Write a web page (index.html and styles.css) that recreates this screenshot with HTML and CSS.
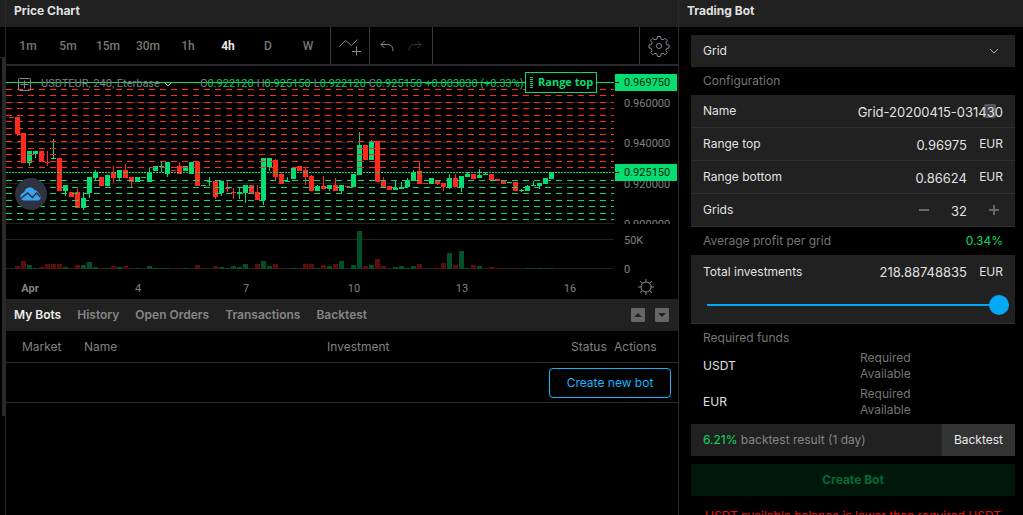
FILE: index.html
```html
<!DOCTYPE html>
<html lang="en">
<head>
    <meta charset="UTF-8">
    <meta name="viewport" content="width=device-width, initial-scale=1.0">
    <title>Trading Bot</title>
    <link rel="stylesheet" href="styles.css">
</head>
<body>
    <div class="gutter"><div class="gutter-top"></div><div class="gutter-bar"></div></div>

    <main class="main">
        <h2 class="panel-title">Price Chart</h2>

        <div class="toolbar">
            <div class="intervals">
                <button>1m</button>
                <button>5m</button>
                <button>15m</button>
                <button>30m</button>
                <button>1h</button>
                <button class="active">4h</button>
                <button>D</button>
                <button>W</button>
            </div>
            <button class="tool" aria-label="Indicators">
                <svg width="24" height="20" viewBox="0 0 24 20"><path d="M1.500 10.500 7.500 4.500 13.500 9.500 19.500 3.500M18.500 10.500v9M14 15.500h9"/></svg>
            </button>
            <div class="tool history">
                <button aria-label="Undo"><svg width="14" height="12" viewBox="0 0 14 12"><path d="M4.500 1 1 4.500 4.500 8M1 4.500h6.500q5.500 0 5.500 6.500"/></svg></button>
                <button aria-label="Redo" disabled><svg width="14" height="12" viewBox="0 0 14 12"><path d="M9.500 1 13 4.500 9.500 8M13 4.500H6.500Q1 4.500 1 11"/></svg></button>
            </div>
            <button class="tool settings" aria-label="Settings">
                <svg width="22" height="22" viewBox="0 0 22 22"><circle cx="11" cy="11" r="2.500"/><path d="M9.500 1.500h3l.5 2.500 2 .8 2.200-1.400 2.100 2.100-1.400 2.200.8 1.800 2.300.5v3l-2.300.5-.8 2 1.400 2.100-2.100 2.100-2.200-1.400-2 .8-.5 2.400h-3L9 19.100l-2-.8-2.200 1.400-2.100-2.100 1.400-2.100-.8-2L1 13v-3l2.300-.5.8-1.800-1.400-2.200 2.100-2.100L7 4.800 9 4z"/></svg>
            </button>
        </div>

        <div class="chart">
            <svg class="plot" id="plot"></svg>
            <svg class="axis" id="axis"></svg>
            <div class="legend">
                <svg width="13" height="13" viewBox="0 0 13 13"><rect x=".5" y=".5" width="12" height="12" rx="1"/><path d="M6.500 2.500v8M2.500 6.500h8"/></svg>
                <span class="symbol">USDTEUR, 240, Eterbase</span>
                <svg class="caret" width="8" height="5" viewBox="0 0 8 5"><path d="M1 1l3 3 3-3"/></svg>
                <span class="ohlc">O<b>0.922120</b></span>
                <span class="ohlc">H<b>0.925150</b></span>
                <span class="ohlc">L<b>0.922120</b></span>
                <span class="ohlc">C<b>0.925150</b></span>
                <span class="ohlc"><b>+0.003030 (+0.33%)</b></span>
            </div>
            <div class="range-tag">Range top</div>
            <div class="badge">
                <svg width="22" height="14" viewBox="0 0 22 14"><path d="M4 13.500a4 4 0 0 1-1.500-7.500Q4 5 4.500 4.500A5.500 5.500 0 0 1 14.500 3Q18 3.500 18.500 6.500A3.800 3.800 0 0 1 18.500 13.500z" fill="#3aa2ee"/><path d="M1 11.500 7.500 6l5 4.500 4-4.500 4 4" fill="none" stroke="#2a2e39" stroke-width="1.500"/></svg>
            </div>
        </div>

        <nav class="tabs">
            <button class="active">My Bots</button>
            <button>History</button>
            <button>Open Orders</button>
            <button>Transactions</button>
            <button>Backtest</button>
            <button class="square first" aria-label="Expand"><svg width="8" height="4" viewBox="0 0 8 4"><path d="M0 4 4 0l4 4z"/></svg></button>
            <button class="square" aria-label="Collapse"><svg width="8" height="4" viewBox="0 0 8 4"><path d="M0 0l4 4 4-4z"/></svg></button>
        </nav>

        <table class="bots">
            <thead>
                <tr>
                    <th class="col-market">Market</th>
                    <th class="col-name">Name</th>
                    <th>Investment</th>
                    <th class="col-status">Status</th>
                    <th class="col-actions">Actions</th>
                </tr>
            </thead>
            <tbody>
                <tr>
                    <td colspan="5"><button class="new-bot">Create new bot</button></td>
                </tr>
            </tbody>
        </table>
    </main>

    <aside class="side">
        <h2 class="panel-title">Trading Bot</h2>
        <form class="form">
            <div class="select">
                <select aria-label="Bot type"><option>Grid</option></select>
                <svg width="10" height="6" viewBox="0 0 10 6"><path d="M1 1l4 4 4-4"/></svg>
            </div>

            <div class="caption">Configuration</div>
            <div class="row">
                <label for="name">Name</label>
                <span class="autofill"></span>
                <input id="name" class="wide" type="text" value="Grid-20200415-031430">
            </div>
            <div class="row">
                <label for="top">Range top</label>
                <input id="top" type="text" value="0.96975">
                <span class="unit">EUR</span>
            </div>
            <div class="row">
                <label for="bottom">Range bottom</label>
                <input id="bottom" type="text" value="0.86624">
                <span class="unit">EUR</span>
            </div>
            <div class="row">
                <label for="grids">Grids</label>
                <button type="button" class="step" aria-label="Fewer grids"><svg width="10" height="10" viewBox="0 0 10 10"><path d="M0 5h10"/></svg></button>
                <input id="grids" class="count" type="text" value="32">
                <span class="unit"><button type="button" class="step" aria-label="More grids"><svg width="10" height="10" viewBox="0 0 10 10"><path d="M0 5h10M5 0v10"/></svg></button></span>
            </div>

            <div class="caption">Average profit per grid <span class="profit">0.34%</span></div>
            <div class="invest">
                <div class="row">
                    <label for="total">Total investments</label>
                    <input id="total" type="text" value="218.88748835">
                    <span class="unit">EUR</span>
                </div>
                <input class="slider" type="range" min="0" max="100" value="100" aria-label="Total investments">
            </div>

            <div class="caption funds-caption">Required funds</div>
            <div class="fund">
                <span>USDT</span>
                <div class="amounts">Required<br>Available</div>
            </div>
            <div class="fund">
                <span>EUR</span>
                <div class="amounts">Required<br>Available</div>
            </div>

            <div class="backtest">
                <span><b>6.21%</b> backtest result (1 day)</span>
                <button type="button">Backtest</button>
            </div>
            <button type="button" class="create" disabled>Create Bot</button>
            <p class="error">USDT available balance is lower than required USDT</p>
        </form>
    </aside>

    <script src="chart.js"></script>
</body>
</html>
```

FILE: styles.css
```css
* {
    box-sizing: border-box;
}

body {
    margin: 0;
    height: 100vh;
    display: flex;
    overflow: hidden;
    background-color: #000;
    color: #e0e0e0;
    font-family: Inter, sans-serif;
    font-size: 12px;
    line-height: 16px;
}

button,
input,
select {
    margin: 0;
    padding: 0;
    border: none;
    background: none;
    color: inherit;
    font: inherit;
}

svg {
    fill: none;
    stroke: #868993;
}

.gutter {
    width: 6px;
    border-right: 1px solid #2a2a2a;
    flex: none;
}

.gutter-top {
    height: 58px;
    border-top: 27px solid #212121;
    border-bottom: 1px solid #2a2a2a;
}

.gutter-bar {
    height: 358px;
    margin-left: 2px;
    background-color: #2a2a2a;
}

.main {
    flex: 1;
    min-width: 0;
}

.panel-title {
    height: 27px;
    margin: 0;
    padding: 3px 8px;
    background-color: #212121;
    font-size: 12px;
    font-weight: 700;
}

.toolbar {
    display: flex;
    height: 39px;
    border-bottom: 2px solid #2a2a2e;
}

.intervals {
    display: flex;
    padding: 0 2px;
}

.intervals button {
    width: 40px;
    color: #777;
    font-family: Roboto, sans-serif;
    font-weight: 500;
    font-size: 12px;
}

.intervals .active {
    color: #e8e8e8;
    font-weight: 700;
}

.tool {
    display: flex;
    align-items: center;
    justify-content: center;
    width: 39px;
    border-left: 1px solid #363a45;
}

.history {
    width: 64px;
    gap: 14px;
    border-right: 1px solid #363a45;
}

.history button {
    display: flex;
}

.history button:disabled {
    opacity: 0.4;
}

.settings {
    margin-left: auto;
}

.chart {
    position: relative;
    display: flex;
    height: 233px;
}

.plot {
    flex: 1;
    min-width: 0;
    height: 233px;
}

.axis {
    width: 64px;
    height: 233px;
}

.plot text,
.axis text {
    fill: #808080;
    stroke: none;
    font-family: Roboto, sans-serif;
    font-size: 11px;
}

.axis .on-tag {
    fill: #00240f;
}

.plot .month {
    font-weight: 700;
}

.legend {
    position: absolute;
    top: 10px;
    left: 12px;
    display: flex;
    align-items: center;
    color: #808080;
    font-family: Roboto, sans-serif;
    font-size: 11px;
    white-space: nowrap;
}

.legend b {
    color: #05c665;
    font-weight: 400;
}

.symbol {
    margin: 0 4px 0 10px;
}

.caret {
    margin-right: 28px;
    stroke: #ccc;
}

.ohlc {
    margin-right: 3px;
}

.range-tag {
    position: absolute;
    top: 6px;
    right: 81px;
    width: 72px;
    height: 21px;
    padding-left: 12px;
    border: 1px solid #05dd71;
    background-color: #000;
    color: #05dd71;
    font: 700 11px/18px "Open Sans", sans-serif;
}

.range-tag::before {
    content: "";
    position: absolute;
    top: 4px;
    left: 4px;
    width: 3px;
    height: 11px;
    background: repeating-linear-gradient(#05dd71 0 1px, #000 1px 2px);
}

.badge {
    position: absolute;
    top: 112px;
    left: 9px;
    display: flex;
    align-items: center;
    justify-content: center;
    width: 32px;
    height: 32px;
    border-radius: 50%;
    background-color: #2f3241;
}

.badge svg {
    stroke: none;
}

.tabs {
    display: flex;
    align-items: center;
    gap: 16px;
    height: 32px;
    padding: 0 9px 0 8px;
    background-color: #212121;
    color: #858585;
    font-weight: 600;
}

.tabs button {
    font-weight: 600;
}

.tabs .active {
    color: #eee;
}

.tabs .square {
    display: flex;
    align-items: center;
    justify-content: center;
    width: 14px;
    height: 14px;
    margin-left: -6px;
    border-radius: 1px;
    background-color: #666;
}

.tabs .first {
    margin-left: auto;
}

.square svg {
    fill: #212121;
    stroke: none;
}

.bots {
    width: 100%;
    table-layout: fixed;
    border-collapse: separate;
    border-spacing: 0;
}

.bots th {
    height: 32px;
    padding: 0;
    border-bottom: 1px solid #2a2a2a;
    color: #808080;
    font-weight: 400;
    text-align: left;
}

.bots td {
    height: 40px;
    padding: 0 7px 0 0;
    border-bottom: 1px solid #2a2a2a;
    text-align: right;
}

.bots .col-market {
    width: 78px;
    padding-left: 16px;
}

.col-name {
    width: 243px;
}

.col-status {
    width: 43px;
}

.col-actions {
    width: 64px;
}

.new-bot {
    width: 122px;
    height: 30px;
    border: 1px solid #14b4ff;
    border-radius: 4px;
    color: #14b4ff;
}

.side {
    width: 345px;
    flex: none;
    border-left: 1px solid #2a2a2a;
}

.form {
    padding: 8px 8px 0 12px;
}

.select {
    display: flex;
    align-items: center;
    height: 32px;
    padding-right: 16px;
    background-color: #212121;
}

.select select {
    flex: 1;
    height: 32px;
    padding: 0 12px;
    appearance: none;
}

.select svg {
    stroke: #aaa;
}

.caption {
    display: flex;
    justify-content: space-between;
    padding: 6px 12px;
    color: #757575;
}

.profit {
    color: #05dd60;
}

.row {
    position: relative;
    display: flex;
    align-items: center;
    height: 33px;
    padding: 0 12px;
    border-bottom: 1px solid #303030;
    background-color: #212121;
}

.row label {
    flex: 1;
}

.row input {
    width: 120px;
    height: 32px;
    padding-top: 1px;
    font-size: 13px;
    text-align: right;
}

.row .wide {
    position: relative;
    width: 200px;
}

.row .count {
    width: 34px;
}

.autofill {
    position: absolute;
    right: 19px;
    top: 9px;
    width: 12px;
    height: 14px;
    border: 2px solid #5a5a5a;
    border-radius: 2px;
    background-color: #45454d;
}

.unit {
    width: 36px;
    text-align: right;
}

.step {
    padding: 4px;
}

.step svg {
    display: block;
    stroke: #686868;
    stroke-width: 2;
}

.invest {
    height: 69px;
    border-bottom: 1px solid #303030;
    background-color: #212121;
}

.invest .row {
    border: none;
}

.slider {
    display: block;
    width: calc(100% - 22px);
    height: 20px;
    margin: 7px 6px 0 16px;
    appearance: none;
    background: linear-gradient(#03a9f4, #03a9f4) center / 100% 2px no-repeat;
}

.slider::-webkit-slider-thumb {
    appearance: none;
    width: 20px;
    height: 20px;
    border-radius: 50%;
    background-color: #03a9f4;
}

.funds-caption {
    padding-bottom: 4px;
}

.fund {
    display: flex;
    align-items: center;
    justify-content: space-between;
    margin-bottom: 4px;
    padding: 0 12px;
}

.amounts {
    width: 143px;
    color: #757575;
}

.backtest {
    display: flex;
    align-items: center;
    justify-content: space-between;
    height: 32px;
    margin: 6px 0 8px;
    padding-left: 12px;
    background-color: #212121;
    color: #858585;
}

.backtest b {
    color: #05dd60;
    font-weight: 400;
}

.backtest button {
    height: 32px;
    padding: 0 12px;
    background-color: #333;
    color: #e8e8e8;
}

.create {
    width: 100%;
    height: 32px;
    background-color: #00170b;
    color: #026b37;
    font-weight: 700;
}

.error {
    margin: 12px 0 0;
    color: #e51414;
    text-align: center;
    white-space: nowrap;
}
```

FILE: chart.js
```js
const GREEN = '#05dd71';
const RED = '#ff2a1c';
const plot = document.getElementById('plot');
const axis = document.getElementById('axis');

function add(parent, tag, attrs, text) {
    const el = document.createElementNS('http://www.w3.org/2000/svg', tag);
    for (const key in attrs) el.setAttribute(key, attrs[key]);
    if (text) el.textContent = text;
    parent.appendChild(el);
}

function hline(y, stroke, dash) {
    add(plot, 'line', { x1: 0, x2: '100%', y1: y + 0.5, y2: y + 0.5, stroke: stroke, 'stroke-dasharray': dash || 'none' });
}

// body top, body bottom, wick top, wick bottom, up (1) or down (0), volume (negative = red)
const candles = [
    [17,18,17,18,0,0],[17,34,17,36,0,-3],[33,63,33,63,0,-8],[51,63,51,66,1,4],[51,54,51,58,1,1],
    [51,62,51,62,0,-2],[62,63,51,66,0,-5],[58,59,39,59,1,-5],[58,91,58,91,0,-5],[85,91,85,96,1,2],
    [92,97,92,97,0,-1],[92,108,87,108,0,-4],[98,108,92,110,1,4],[77,93,77,98,1,7],[72,78,70,80,1,2],
    [77,86,77,86,0,-1],[75,86,75,86,1,1],[73,78,66,83,0,-3],[70,78,70,80,1,2],[70,78,64,78,0,-3],
    [77,82,77,87,0,-1],[77,82,77,82,1,1],[77,78,77,78,1,0],[72,82,68,82,1,3],[66,71,66,71,1,1],
    [66,67,62,72,1,1],[62,74,62,77,1,1],[70,71,70,71,0,0],[66,74,62,74,0,-1],[66,71,66,71,1,1],
    [62,74,62,74,1,0],[62,86,62,86,0,-4],[85,86,85,86,1,0],[81,82,77,86,1,0],[81,97,81,99,0,-3],
    [81,93,81,96,1,2],[88,89,81,92,0,1],[92,93,88,99,0,3],[92,94,88,99,1,2],[85,93,85,103,1,5],
    [85,93,85,93,0,0],[92,100,85,100,0,-5],[58,100,58,105,1,8],[58,67,58,71,1,3],[60,77,59,80,0,-5],
    [74,84,72,84,0,-1],[81,82,77,82,1,0],[68,79,68,79,1,1],[66,71,66,71,0,0],[70,77,67,85,0,-5],
    [76,91,75,91,0,-5],[86,91,85,91,1,1],[86,89,76,89,0,-4],[85,89,85,91,1,3],[85,91,78,91,0,-5],
    [85,91,85,93,1,8],[86,87,86,87,0,0],[74,87,74,87,1,4],[45,75,32,75,1,38],[45,60,45,60,0,-3],
    [41,60,40,60,1,4],[41,82,41,82,0,-10],[80,87,77,87,0,-3],[86,90,86,90,0,0],[88,90,80,90,1,2],
    [87,89,82,89,1,3],[80,87,78,87,1,1],[72,81,70,81,1,3],[71,84,61,84,0,-5],[83,84,83,84,0,0],
    [78,84,78,84,1,0],[81,84,81,85,0,-1],[83,87,83,91,0,-6],[78,88,74,89,1,16],[78,87,74,87,0,-4],
    [76,88,76,92,1,18],[74,77,72,77,1,1],[74,79,74,79,0,-4],[75,78,69,78,1,3],[74,75,72,75,1,0],
    [74,80,74,80,0,-2],[79,81,79,81,0,-1],[81,84,81,84,0,-1],[82,83,82,83,1,0],[82,91,82,91,0,-1],
    [90,91,89,92,1,0],[86,91,85,91,1,1],[85,86,81,86,1,1],[83,86,83,89,1,1],[78,84,78,84,1,1],
    [72,79,72,79,1,1]
];

[36, 76, 117, 157, 173, 202].forEach(y => hline(y, '#212121'));

candles.forEach(([top, bottom, high, low, up, volume], i) => {
    const x = 3 + i * 6;
    const fill = up ? GREEN : RED;
    add(plot, 'rect', { x: x, y: 34 + top, width: 5, height: bottom - top, fill: fill, stroke: 'none' });
    add(plot, 'rect', { x: x + 2, y: 34 + high, width: 1, height: low - high, fill: fill, stroke: 'none' });
    const size = Math.abs(volume);
    add(plot, 'rect', { x: x, y: 203 - size, width: 5, height: size, fill: volume < 0 ? '#5c0f0a' : '#025029', stroke: 'none' });
});

// sell grids above the price, buy grids below
[23, 29, 36, 42, 49, 55, 62, 68, 75, 82, 88, 95, 101].forEach(y => hline(y, RED, '6 5'));
[114, 121, 127, 134, 140, 147, 153].forEach(y => hline(y, GREEN, '6 5'));
hline(106, GREEN, '2 1');
hline(16, GREEN);

[['Apr', 24], ['4', 132], ['7', 240], ['10', 348], ['13', 456], ['16', 564]].forEach(([label, x]) => {
    add(plot, 'text', { x: x, y: 226, 'text-anchor': 'middle', class: label === 'Apr' ? 'month' : 'day' }, label);
});

[['0.960000', 41], ['0.940000', 81], ['0.920000', 122], ['0.900000', 162], ['50K', 178], ['0', 207]].forEach(([label, y]) => {
    add(axis, 'text', { x: 10, y: y }, label);
});
// the price scale ends where the volume pane starts
add(axis, 'rect', { x: 0, y: 158, width: 64, height: 9, fill: '#000', stroke: 'none' });
[['0.969750', 8], ['0.925150', 98]].forEach(([label, y]) => {
    add(axis, 'rect', { x: 1, y: y, width: 62, height: 17, fill: GREEN, stroke: 'none' });
    add(axis, 'path', { d: `M1 ${y + 8.5}h4`, stroke: '#000' });
    add(axis, 'text', { x: 10, y: y + 12, class: 'on-tag' }, label);
});
add(axis, 'circle', { cx: 32, cy: 221, r: 5 });
for (let a = 0; a < 360; a += 45) {
    add(axis, 'path', { d: 'M32 216v-3', transform: `rotate(${a} 32 221)` });
}
```
